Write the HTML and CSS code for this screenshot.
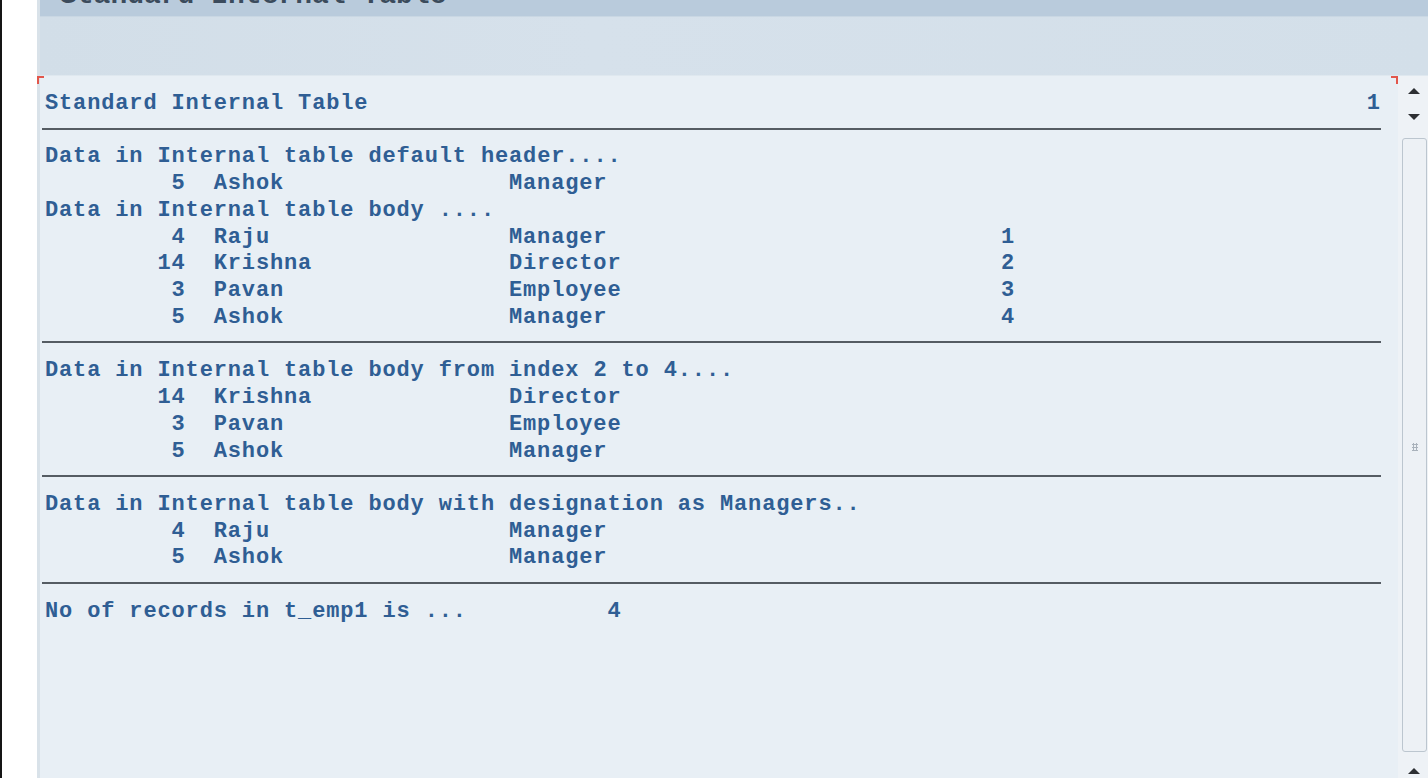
FILE: index.html
```html
<!DOCTYPE html>
<html lang="en">
<head>
<meta charset="utf-8">
<title>Standard Internal Table</title>
<link rel="stylesheet" href="styles.css">
</head>
<body>
<div class="frame">
  <div class="gutter"></div>
  <div class="window">
    <div class="titlebar"><span class="title">Standard Internal Table</span></div>
    <div class="toolbar"></div>
    <div class="output">
      <div class="list">
        <div class="line head"><span>Standard Internal Table</span><span>1</span></div>
        <div class="rule"></div>
        <div class="line">Data in Internal table default header....</div>
        <div class="line row"><span class="num">5</span><span class="name">Ashok</span><span>Manager</span><span></span></div>
        <div class="line">Data in Internal table body ....</div>
        <div class="line row"><span class="num">4</span><span class="name">Raju</span><span>Manager</span><span>1</span></div>
        <div class="line row"><span class="num">14</span><span class="name">Krishna</span><span>Director</span><span>2</span></div>
        <div class="line row"><span class="num">3</span><span class="name">Pavan</span><span>Employee</span><span>3</span></div>
        <div class="line row"><span class="num">5</span><span class="name">Ashok</span><span>Manager</span><span>4</span></div>
        <div class="rule"></div>
        <div class="line">Data in Internal table body from index 2 to 4....</div>
        <div class="line row"><span class="num">14</span><span class="name">Krishna</span><span>Director</span><span></span></div>
        <div class="line row"><span class="num">3</span><span class="name">Pavan</span><span>Employee</span><span></span></div>
        <div class="line row"><span class="num">5</span><span class="name">Ashok</span><span>Manager</span><span></span></div>
        <div class="rule"></div>
        <div class="line">Data in Internal table body with designation as Managers..</div>
        <div class="line row"><span class="num">4</span><span class="name">Raju</span><span>Manager</span><span></span></div>
        <div class="line row"><span class="num">5</span><span class="name">Ashok</span><span>Manager</span><span></span></div>
        <div class="rule"></div>
        <div class="line count"><span>No of records in t_emp1 is ...</span><span>4</span></div>
      </div>
      <div class="scrollbar">
        <div class="sbtn"><span class="tri up"></span></div>
        <div class="sbtn"><span class="tri down"></span></div>
        <div class="track"><span class="grip"></span></div>
        <div class="sbtn last"><span class="tri up"></span></div>
      </div>
      <span class="corner tl"></span>
      <span class="corner tr"></span>
    </div>
  </div>
</div>
</body>
</html>
```
FILE: styles.css
```css
html, body {
  margin: 0;
  padding: 0;
  height: 100%;
  overflow: hidden;
  background: #ffffff;
}

.frame {
  display: flex;
  height: 778px;
  width: 1428px;
}

.gutter {
  width: 35px;
  border-left: 2px solid #151515;
  background: #ffffff;
  flex: none;
}

.window {
  flex: 1;
  display: flex;
  flex-direction: column;
  border-left: 3px solid #d9e2e9;
  min-width: 0;
}

.titlebar {
  height: 16px;
  background: #b9cbdc;
  overflow: hidden;
  flex: none;
}

.title {
  display: block;
  margin-top: -18px;
  padding-left: 20px;
  font-family: "Liberation Mono", monospace;
  font-weight: 700;
  font-size: 28px;
  line-height: 28px;
  color: #3b4b5c;
}

.toolbar {
  height: 58px;
  border-top: 1px solid #c9d7e3;
  background: linear-gradient(90deg, #d2dee8 0%, #d6e1eb 40%, #d3dfe9 100%);
  border-bottom: 1px solid #dfe8ef;
  flex: none;
}

.output {
  position: relative;
  flex: 1;
  display: flex;
  background: #e8eff5;
  min-height: 0;
}

.list {
  --cw: 14.06px;
  flex: 1;
  padding: 15px 0 0 5px;
  font-family: "Liberation Mono", "Courier New", monospace;
  font-weight: 700;
  font-size: 22px;
  letter-spacing: 0.86px;
  color: #2f5e94;
}

.line {
  height: 26.74px;
  line-height: 26.74px;
  white-space: pre;
}

.head {
  display: grid;
  grid-template-columns: calc(var(--cw) * 94) auto;
}

.row {
  display: grid;
  grid-template-columns: calc(var(--cw) * 10) calc(var(--cw) * 23) calc(var(--cw) * 35) auto;
}

.row .num {
  text-align: right;
}

.row .name {
  padding-left: calc(var(--cw) * 2);
}

.count {
  display: grid;
  grid-template-columns: calc(var(--cw) * 40) auto;
}

.rule {
  height: 26.74px;
  box-sizing: border-box;
  padding-bottom: 5px;
  display: flex;
  align-items: center;
  margin-left: -3px;
}

.rule::before {
  content: "";
  display: block;
  width: 1339px;
  height: 2px;
  background: #555c63;
}

.scrollbar {
  width: 30px;
  flex: none;
  display: flex;
  flex-direction: column;
  padding-top: 2px;
  background: #eef2f6;
}

.sbtn {
  height: 26px;
  display: flex;
  align-items: center;
  justify-content: center;
  flex: none;
}

.sbtn.last {
  height: 24px;
  margin-top: 2px;
  align-items: flex-start;
  padding-top: 14px;
  box-sizing: border-box;
}

.tri {
  width: 0;
  height: 0;
  border-left: 6px solid transparent;
  border-right: 6px solid transparent;
  margin-left: 2px;
}

.tri.up {
  border-bottom: 6px solid #2d2f33;
}

.tri.down {
  border-top: 6px solid #2d2f33;
}

.track {
  flex: 1;
  margin: 8px 1px 0 4px;
  border: 1px solid #bcc6cf;
  border-radius: 3px;
  background: #edf1f5;
  display: flex;
  align-items: center;
  justify-content: center;
}

.grip {
  width: 6px;
  height: 8px;
  margin-top: 4px;
  background-image: radial-gradient(circle, #a9b2bb 1px, transparent 1.2px);
  background-size: 3px 3px;
}

.corner {
  position: absolute;
  top: 0;
  width: 5px;
  height: 6px;
}

.corner.tl {
  left: -3px;
  border-top: 2px solid #e2564b;
  border-left: 2px solid #e2564b;
}

.corner.tr {
  right: 30px;
  border-top: 2px solid #e2564b;
  border-right: 2px solid #e2564b;
}
```
